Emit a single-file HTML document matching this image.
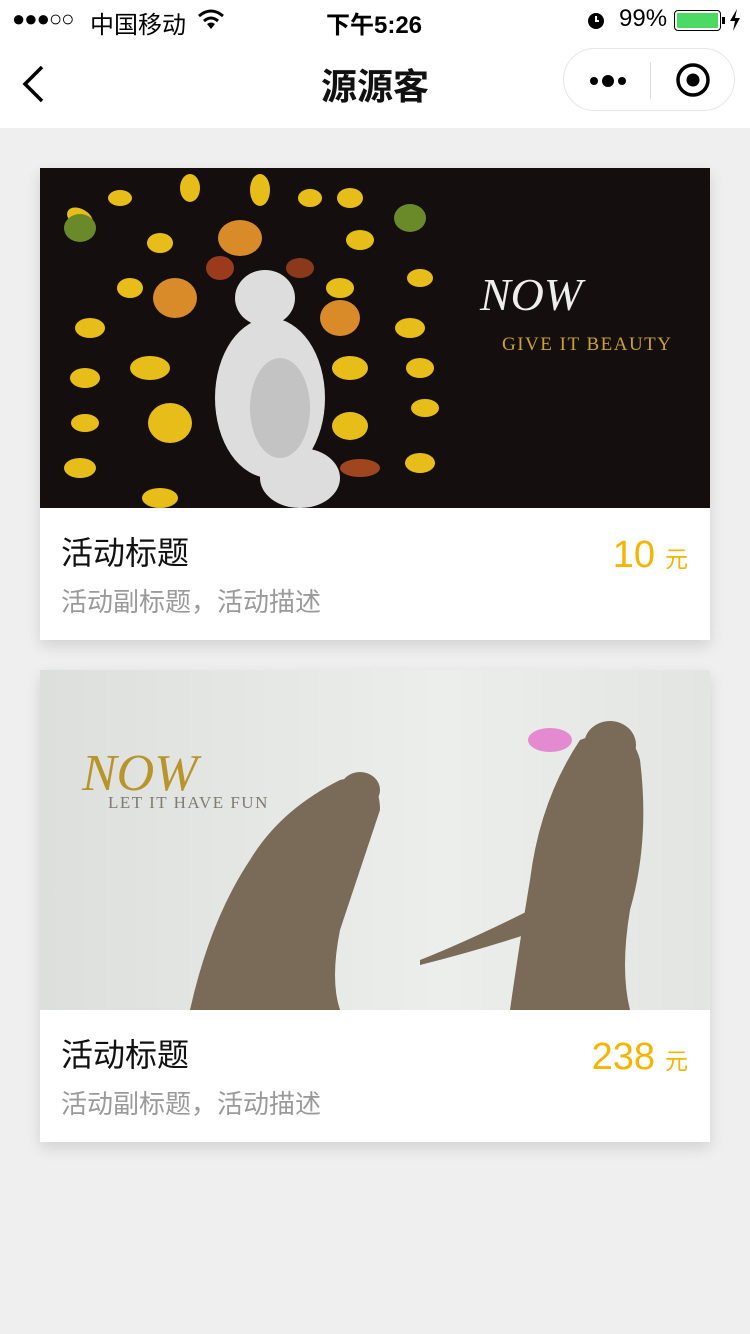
<!DOCTYPE html>
<html><head><meta charset="utf-8">
<style>
*{margin:0;padding:0;box-sizing:border-box}
body{width:750px;height:1334px;background:#efefef;font-family:"Liberation Sans","Noto Sans CJK SC",sans-serif;position:relative;overflow:hidden}
.status{position:absolute;top:0;left:0;width:750px;height:40px;background:#fff;font-size:24px;color:#000}
.nav{position:absolute;top:40px;left:0;width:750px;height:88px;background:#fff}
.title{position:absolute;left:0;right:0;top:18px;text-align:center;font-size:36px;font-weight:bold;color:#111}
.caps{position:absolute;left:563px;top:8px;width:172px;height:63px;border:1px solid #e6e6e6;border-radius:32px;background:#fff}
.card{position:absolute;left:40px;width:670px;height:472px;background:#fff;box-shadow:0 6px 14px rgba(0,0,0,0.12)}
.img{position:absolute;left:0;top:0;width:670px;height:340px;overflow:hidden}
.t{position:absolute;left:21px;top:360px;font-size:32px;color:#111}
.s{position:absolute;left:21px;top:414px;font-size:26px;color:#9a9a9a}
.p{position:absolute;right:22px;top:366px;color:#f4b400;font-size:38px}
.p span{font-size:23px;margin-left:10px}
</style></head><body>
<div class="status">
 <div style="position:absolute;left:12px;top:6px;font-size:22px;letter-spacing:-1px">●●●○○</div>
 <div style="position:absolute;left:90px;top:5px">中国移动</div>
 <svg style="position:absolute;left:197px;top:8px" width="28" height="22" viewBox="0 0 28 22"><path d="M2 8 Q14 -2 26 8" stroke="#000" stroke-width="3" fill="none"/><path d="M7 13 Q14 7 21 13" stroke="#000" stroke-width="3" fill="none"/><path d="M14 21 L10 16 Q14 13 18 16Z" fill="#000"/></svg>
 <div style="position:absolute;left:326px;top:5px;font-weight:bold">下午5:26</div>
 <svg style="position:absolute;left:586px;top:9px" width="20" height="22" viewBox="0 0 20 22"><circle cx="10" cy="12" r="8" fill="#000"/><path d="M10 7 V12 H13" stroke="#fff" stroke-width="2" fill="none"/></svg>
 <div style="position:absolute;left:619px;top:5px">99%</div>
 <div style="position:absolute;left:674px;top:10px;width:47px;height:21px;border:1.5px solid #000;border-radius:4px;padding:2px"><div style="width:100%;height:100%;background:#4cd964;border-radius:1px"></div></div>
 <div style="position:absolute;left:722px;top:17px;width:3px;height:7px;background:#000"></div>
 <svg style="position:absolute;left:729px;top:9px" width="12" height="22" viewBox="0 0 12 22"><path d="M8 0 L1 12 H6 L4 22 L11 9 H6Z" fill="#000"/></svg>
</div>
<div class="nav">
 <svg style="position:absolute;left:20px;top:24px" width="26" height="40" viewBox="0 0 26 40"><path d="M22 3 L5 20 L22 37" stroke="#000" stroke-width="3.5" fill="none"/></svg>
 <div class="title">源源客</div>
 <div class="caps">
  <svg style="position:absolute;left:24px;top:22px" width="40" height="20" viewBox="0 0 40 20"><circle cx="6" cy="10" r="4" fill="#000"/><circle cx="20" cy="10" r="6" fill="#000"/><circle cx="34" cy="10" r="4" fill="#000"/></svg>
  <div style="position:absolute;left:86px;top:13px;width:1px;height:37px;background:#ddd"></div>
  <svg style="position:absolute;left:111px;top:13px" width="36" height="36" viewBox="0 0 36 36"><circle cx="18" cy="18" r="15" stroke="#000" stroke-width="3.5" fill="none"/><circle cx="18" cy="18" r="6.5" fill="#000"/></svg>
 </div>
</div>

<div class="card" style="top:168px">
 <div class="img" style="background:#140f0e">
  <svg width="670" height="340" viewBox="0 0 670 340">
   <g fill="#e7bd1a">
    <ellipse cx="40" cy="50" rx="14" ry="9" transform="rotate(30 40 50)"/>
    <ellipse cx="80" cy="30" rx="12" ry="8"/>
    <ellipse cx="150" cy="20" rx="10" ry="14"/>
    <ellipse cx="220" cy="22" rx="10" ry="16"/>
    <ellipse cx="270" cy="30" rx="12" ry="9"/>
    <ellipse cx="320" cy="72" rx="14" ry="10"/>
    <ellipse cx="300" cy="120" rx="14" ry="10"/>
    <ellipse cx="370" cy="160" rx="15" ry="10"/>
    <ellipse cx="380" cy="200" rx="14" ry="10"/>
    <ellipse cx="385" cy="240" rx="14" ry="9"/>
    <ellipse cx="380" cy="295" rx="15" ry="10"/>
    <ellipse cx="310" cy="200" rx="18" ry="12"/>
    <ellipse cx="310" cy="258" rx="18" ry="14"/>
    <ellipse cx="110" cy="200" rx="20" ry="12"/>
    <ellipse cx="50" cy="160" rx="15" ry="10"/>
    <ellipse cx="45" cy="210" rx="15" ry="10"/>
    <ellipse cx="45" cy="255" rx="14" ry="9"/>
    <ellipse cx="40" cy="300" rx="16" ry="10"/>
    <ellipse cx="120" cy="75" rx="13" ry="10"/>
    <ellipse cx="130" cy="255" rx="22" ry="20"/>
    <ellipse cx="90" cy="120" rx="13" ry="10"/>
    <ellipse cx="310" cy="30" rx="13" ry="10"/>
    <ellipse cx="380" cy="110" rx="13" ry="9"/>
    <ellipse cx="120" cy="330" rx="18" ry="10"/>
   </g>
   <g fill="#d98b2a"><ellipse cx="200" cy="70" rx="22" ry="18"/><ellipse cx="135" cy="130" rx="22" ry="20"/><ellipse cx="300" cy="150" rx="20" ry="18"/><ellipse cx="180" cy="100" rx="14" ry="12" fill="#9b3a1c"/><ellipse cx="260" cy="100" rx="14" ry="10" fill="#8a3a1a"/><ellipse cx="320" cy="300" rx="20" ry="9" fill="#a0461f"/><ellipse cx="40" cy="60" rx="16" ry="14" fill="#6a8a2a"/><ellipse cx="370" cy="50" rx="16" ry="14" fill="#6a8a2a"/></g>
   <g fill="#ddd"><ellipse cx="225" cy="130" rx="30" ry="28"/><ellipse cx="230" cy="230" rx="55" ry="80"/><ellipse cx="260" cy="310" rx="40" ry="30"/></g>
   <g fill="#aaa" opacity="0.5"><ellipse cx="240" cy="240" rx="30" ry="50"/></g>
   <text x="440" y="142" font-family="Liberation Serif" font-style="italic" font-size="46" fill="#eee">NOW</text>
   <text x="462" y="182" font-family="Liberation Serif" font-size="19" letter-spacing="1.5" fill="#c9a233">GIVE IT BEAUTY</text>
  </svg>
 </div>
 <div class="t">活动标题</div>
 <div class="s">活动副标题，活动描述</div>
 <div class="p">10<span>元</span></div>
</div>

<div class="card" style="top:670px">
 <div class="img" style="background:linear-gradient(90deg,#dcdfdb,#eceeec 60%,#e2e5e2)">
  <svg width="670" height="340" viewBox="0 0 670 340">
   <g fill="#7a6a58">
    <path d="M150 340 Q170 250 210 190 Q240 140 300 110 Q340 100 340 140 Q320 200 300 260 Q290 310 300 340Z"/>
    <ellipse cx="320" cy="120" rx="20" ry="18"/>
    <path d="M470 340 Q480 270 490 210 Q500 130 540 70 Q590 50 600 90 Q610 170 590 240 Q580 300 590 340Z"/>
    <ellipse cx="570" cy="75" rx="26" ry="24"/>
    <path d="M380 290 Q430 270 490 240 L500 260 Q440 280 380 295Z"/>
   </g>
   <ellipse cx="510" cy="70" rx="22" ry="12" fill="#e48ad0"/>
   <text x="42" y="120" font-family="Liberation Serif" font-style="italic" font-size="52" fill="#b8952a">NOW</text>
   <text x="68" y="138" font-family="Liberation Serif" font-size="17" letter-spacing="1.5" fill="#7f7a72">LET IT HAVE FUN</text>
  </svg>
 </div>
 <div class="t">活动标题</div>
 <div class="s">活动副标题，活动描述</div>
 <div class="p">238<span>元</span></div>
</div>
</body></html>
